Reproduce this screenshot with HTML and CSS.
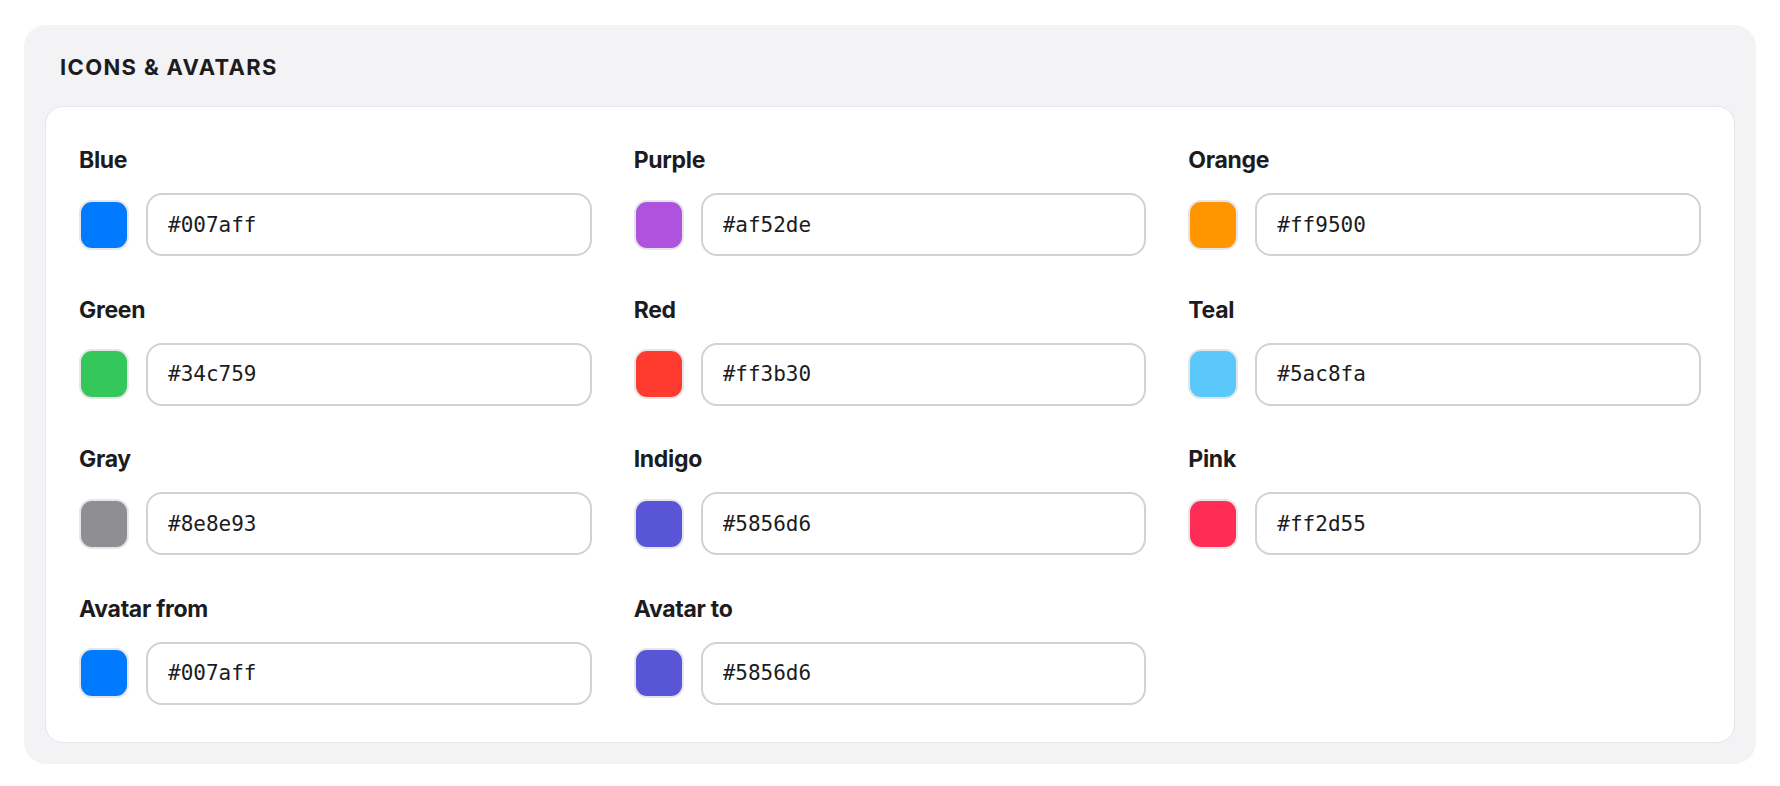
FILE: index.html
```html
<!DOCTYPE html>
<html lang="en">
<head>
    <meta charset="UTF-8">
    <meta name="viewport" content="width=device-width, initial-scale=1.0">
    <title>Theme colours</title>
    <link rel="stylesheet" href="styles.css">
</head>
<body>
    <section class="settings-group">
        <h2 class="group-title">Icons &amp; Avatars</h2>
        <div class="group-card">
            <div class="color-field">
                <label class="color-label">Blue</label>
                <div class="color-row">
                    <span class="swatch" style="background-color: #007aff;"></span>
                    <input type="text" class="color-input" value="#007aff">
                </div>
            </div>
            <div class="color-field">
                <label class="color-label">Purple</label>
                <div class="color-row">
                    <span class="swatch" style="background-color: #af52de;"></span>
                    <input type="text" class="color-input" value="#af52de">
                </div>
            </div>
            <div class="color-field">
                <label class="color-label">Orange</label>
                <div class="color-row">
                    <span class="swatch" style="background-color: #ff9500;"></span>
                    <input type="text" class="color-input" value="#ff9500">
                </div>
            </div>
            <div class="color-field">
                <label class="color-label">Green</label>
                <div class="color-row">
                    <span class="swatch" style="background-color: #34c759;"></span>
                    <input type="text" class="color-input" value="#34c759">
                </div>
            </div>
            <div class="color-field">
                <label class="color-label">Red</label>
                <div class="color-row">
                    <span class="swatch" style="background-color: #ff3b30;"></span>
                    <input type="text" class="color-input" value="#ff3b30">
                </div>
            </div>
            <div class="color-field">
                <label class="color-label">Teal</label>
                <div class="color-row">
                    <span class="swatch" style="background-color: #5ac8fa;"></span>
                    <input type="text" class="color-input" value="#5ac8fa">
                </div>
            </div>
            <div class="color-field">
                <label class="color-label">Gray</label>
                <div class="color-row">
                    <span class="swatch" style="background-color: #8e8e93;"></span>
                    <input type="text" class="color-input" value="#8e8e93">
                </div>
            </div>
            <div class="color-field">
                <label class="color-label">Indigo</label>
                <div class="color-row">
                    <span class="swatch" style="background-color: #5856d6;"></span>
                    <input type="text" class="color-input" value="#5856d6">
                </div>
            </div>
            <div class="color-field">
                <label class="color-label">Pink</label>
                <div class="color-row">
                    <span class="swatch" style="background-color: #ff2d55;"></span>
                    <input type="text" class="color-input" value="#ff2d55">
                </div>
            </div>
            <div class="color-field">
                <label class="color-label">Avatar from</label>
                <div class="color-row">
                    <span class="swatch" style="background-color: #007aff;"></span>
                    <input type="text" class="color-input" value="#007aff">
                </div>
            </div>
            <div class="color-field">
                <label class="color-label">Avatar to</label>
                <div class="color-row">
                    <span class="swatch" style="background-color: #5856d6;"></span>
                    <input type="text" class="color-input" value="#5856d6">
                </div>
            </div>
        </div>
    </section>
</body>
</html>
```

FILE: styles.css
```css
body {
    font-family: Inter, 'Noto Sans', sans-serif;
    margin: 0;
    padding: 25px 24px 20px;
    background-color: #ffffff;
    color: #1c1c1e;
}

.settings-group {
    background-color: #f3f3f5;
    border-radius: 22px;
    padding: 29px 21px 21px;
}

.group-title {
    margin: 0 0 26px 15px;
    font-size: 22px;
    line-height: 26px;
    font-weight: 700;
    letter-spacing: 1.35px;
    text-transform: uppercase;
}

.group-card {
    background-color: #ffffff;
    border: 1px solid #e5e5ea;
    border-radius: 18px;
    padding: 39px 33px 37px;
    display: grid;
    grid-template-columns: repeat(3, 1fr);
    column-gap: 42px;
    row-gap: 39.5px;
}

.color-field {
    display: flex;
    flex-direction: column;
}

.color-label {
    font-size: 23px;
    line-height: 28px;
    font-weight: 700;
    letter-spacing: -0.3px;
    margin-bottom: 19px;
}

.color-row {
    display: flex;
    align-items: center;
    gap: 17px;
}

.swatch {
    flex: none;
    width: 46px;
    height: 46px;
    border: 2px solid #e5e5ea;
    border-radius: 13px;
}

.color-input {
    flex-grow: 1;
    min-width: 0;
    height: 63px;
    box-sizing: border-box;
    padding: 0 20px;
    border: 2px solid #d1d1d6;
    border-radius: 16px;
    background-color: #ffffff;
    font-family: 'DejaVu Sans Mono', monospace;
    font-size: 21px;
    color: #1c1c1e;
    outline: none;
}
```
